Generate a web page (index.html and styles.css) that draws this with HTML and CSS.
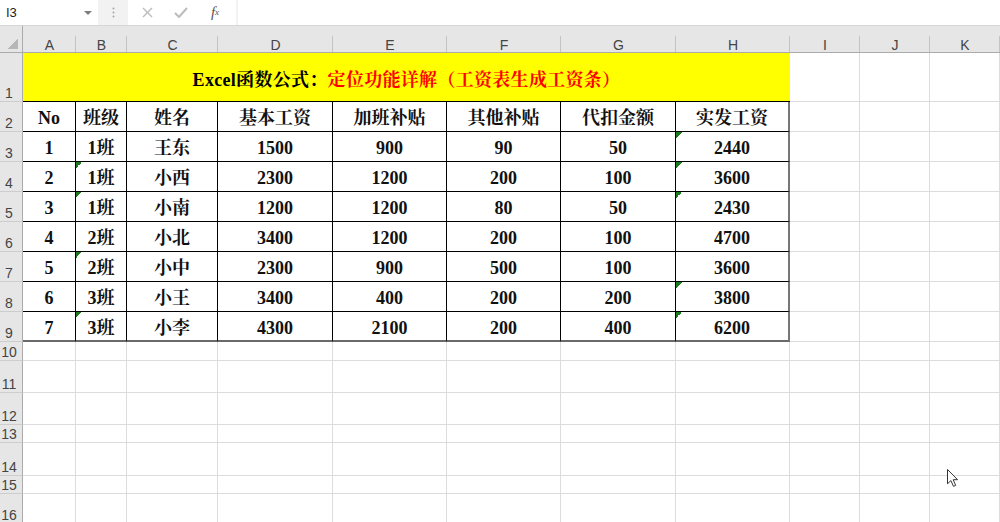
FILE: index.html
```html
<!DOCTYPE html>
<html lang="zh-CN">
<head>
<meta charset="utf-8">
<title>工资表</title>
<link rel="stylesheet" href="styles.css">
</head>
<body>
<div class="toolbar">
  <div class="namebox"><span>I3</span><span class="dd"></span></div>
  <div class="grip">
    <svg width="3" height="11" viewBox="0 0 3 11"><circle cx="1.5" cy="1.5" r="1" fill="#a8a8a8"/><circle cx="1.5" cy="5.5" r="1" fill="#a8a8a8"/><circle cx="1.5" cy="9.5" r="1" fill="#a8a8a8"/></svg>
  </div>
  <div class="fnbox">
    <span class="btn"><svg width="11" height="11" viewBox="0 0 11 11"><path d="M1 1L10 10M10 1L1 10" stroke="#bcbcbc" stroke-width="1.4" fill="none"/></svg></span>
    <span class="btn"><svg width="14" height="11" viewBox="0 0 14 11"><path d="M1 6L5 10L13 1" stroke="#bcbcbc" stroke-width="2" fill="none"/></svg></span>
    <span class="btn fx"><i>f</i><sub>x</sub></span>
  </div>
  <div class="input"></div>
</div>

<div class="sheet">
  <div class="corner"></div>
  <div class="ch">A</div><div class="ch">B</div><div class="ch">C</div><div class="ch">D</div><div class="ch">E</div><div class="ch">F</div><div class="ch">G</div><div class="ch">H</div><div class="ch">I</div><div class="ch">J</div><div class="ch">K</div>

  <div class="rh">1</div>
  <div class="title">Excel函数公式：<span class="red">定位功能详解（工资表生成工资条）</span></div>
  <div class="g"></div><div class="g"></div><div class="g"></div>

  <div class="rh">2</div>
  <div class="t">No</div><div class="t">班级</div><div class="t">姓名</div><div class="t">基本工资</div><div class="t">加班补贴</div><div class="t">其他补贴</div><div class="t">代扣金额</div><div class="t h">实发工资</div>
  <div class="g"></div><div class="g"></div><div class="g"></div>

  <div class="rh">3</div>
  <div class="t">1</div><div class="t">1班</div><div class="t">王东</div><div class="t">1500</div><div class="t">900</div><div class="t">90</div><div class="t">50</div><div class="t h tri">2440</div>
  <div class="g"></div><div class="g"></div><div class="g"></div>

  <div class="rh">4</div>
  <div class="t">2</div><div class="t tri">1班</div><div class="t">小西</div><div class="t">2300</div><div class="t">1200</div><div class="t">200</div><div class="t">100</div><div class="t h tri">3600</div>
  <div class="g"></div><div class="g"></div><div class="g"></div>

  <div class="rh">5</div>
  <div class="t">3</div><div class="t tri">1班</div><div class="t">小南</div><div class="t">1200</div><div class="t">1200</div><div class="t">80</div><div class="t">50</div><div class="t h tri">2430</div>
  <div class="g"></div><div class="g"></div><div class="g"></div>

  <div class="rh">6</div>
  <div class="t">4</div><div class="t">2班</div><div class="t">小北</div><div class="t">3400</div><div class="t">1200</div><div class="t">200</div><div class="t">100</div><div class="t h">4700</div>
  <div class="g"></div><div class="g"></div><div class="g"></div>

  <div class="rh">7</div>
  <div class="t">5</div><div class="t tri">2班</div><div class="t">小中</div><div class="t">2300</div><div class="t">900</div><div class="t">500</div><div class="t">100</div><div class="t h">3600</div>
  <div class="g"></div><div class="g"></div><div class="g"></div>

  <div class="rh">8</div>
  <div class="t">6</div><div class="t">3班</div><div class="t">小王</div><div class="t">3400</div><div class="t">400</div><div class="t">200</div><div class="t">200</div><div class="t h tri">3800</div>
  <div class="g"></div><div class="g"></div><div class="g"></div>

  <div class="rh">9</div>
  <div class="t b">7</div><div class="t b tri">3班</div><div class="t b">小李</div><div class="t b">4300</div><div class="t b">2100</div><div class="t b">200</div><div class="t b">400</div><div class="t b h tri">6200</div>
  <div class="g"></div><div class="g"></div><div class="g"></div>

  <div class="rh">10</div>
  <div class="g"></div><div class="g"></div><div class="g"></div><div class="g"></div><div class="g"></div><div class="g"></div><div class="g"></div><div class="g"></div><div class="g"></div><div class="g"></div><div class="g"></div>
  <div class="rh">11</div>
  <div class="g"></div><div class="g"></div><div class="g"></div><div class="g"></div><div class="g"></div><div class="g"></div><div class="g"></div><div class="g"></div><div class="g"></div><div class="g"></div><div class="g"></div>
  <div class="rh">12</div>
  <div class="g"></div><div class="g"></div><div class="g"></div><div class="g"></div><div class="g"></div><div class="g"></div><div class="g"></div><div class="g"></div><div class="g"></div><div class="g"></div><div class="g"></div>
  <div class="rh">13</div>
  <div class="g"></div><div class="g"></div><div class="g"></div><div class="g"></div><div class="g"></div><div class="g"></div><div class="g"></div><div class="g"></div><div class="g"></div><div class="g"></div><div class="g"></div>
  <div class="rh">14</div>
  <div class="g"></div><div class="g"></div><div class="g"></div><div class="g"></div><div class="g"></div><div class="g"></div><div class="g"></div><div class="g"></div><div class="g"></div><div class="g"></div><div class="g"></div>
  <div class="rh">15</div>
  <div class="g"></div><div class="g"></div><div class="g"></div><div class="g"></div><div class="g"></div><div class="g"></div><div class="g"></div><div class="g"></div><div class="g"></div><div class="g"></div><div class="g"></div>
  <div class="rh">16</div>
  <div class="g"></div><div class="g"></div><div class="g"></div><div class="g"></div><div class="g"></div><div class="g"></div><div class="g"></div><div class="g"></div><div class="g"></div><div class="g"></div><div class="g"></div>
</div>

<svg class="pointer" width="14" height="20" viewBox="0 0 14 20">
  <path d="M1.5 1.5V15.8L4.9 12.6L7.5 18.4L9.7 17.4L7.2 11.7H11.6Z" fill="#fff" stroke="#333" stroke-width="1" stroke-linejoin="round"/>
</svg>
</body>
</html>
```

FILE: styles.css
```css
* { box-sizing: border-box; margin: 0; padding: 0; }

html, body {
  width: 1000px;
  height: 522px;
  overflow: hidden;
  background: #fff;
}

body {
  position: relative;
  font-family: "Liberation Sans", Arial, sans-serif;
}

/* formula bar */
.toolbar {
  display: flex;
  height: 26px;
  background: #f2f2f2;
  border-bottom: 1px solid #d6d6d6;
}

.namebox {
  width: 98px;
  height: 25px;
  background: #fff;
  display: flex;
  align-items: center;
  padding-left: 6px;
  font-size: 13px;
  color: #222;
}

.namebox .dd {
  margin-left: auto;
  margin-right: 6px;
  border-left: 4px solid transparent;
  border-right: 4px solid transparent;
  border-top: 4px solid #7d7d7d;
}

.grip {
  width: 30px;
  display: flex;
  align-items: center;
  justify-content: center;
}

.fnbox {
  width: 108px;
  height: 25px;
  background: #fff;
  display: flex;
  align-items: center;
  padding-left: 2px;
}

.btn {
  width: 34px;
  display: flex;
  align-items: center;
  justify-content: center;
}

.fx {
  font-family: "Liberation Serif", serif;
  font-size: 15px;
  color: #555;
  line-height: 1;
}

.fx sub {
  font-size: 9px;
  font-style: italic;
  vertical-align: -1px;
}

.input {
  flex: 1;
  height: 25px;
  margin-left: 2px;
  background: #fff;
}

/* worksheet grid */
.sheet {
  display: grid;
  grid-template-columns: 23px 53px 51px 91px 115px 114px 114px 115px 114px 70px 70px 70px;
  grid-template-rows: 27px 49px repeat(8, 30px) 19px 32px 32px 18px 33px 18px 30px;
}

.corner {
  background:
    linear-gradient(135deg, transparent 50%, #b7b7b7 50%) right 4px bottom 3px / 10px 10px no-repeat,
    #e6e6e6;
  border-right: 1px solid #ababab;
  border-bottom: 1px solid #ababab;
}

.ch {
  display: flex;
  align-items: flex-end;
  justify-content: center;
  font-size: 14px;
  line-height: 14px;
  color: #444;
  padding-bottom: 0;
  background:
    linear-gradient(#c3c3c3, #c3c3c3) right bottom / 1px 16px no-repeat,
    #e6e6e6;
  border-bottom: 1px solid #ababab;
}

.rh {
  display: flex;
  align-items: flex-end;
  justify-content: center;
  font-size: 14px;
  line-height: 14px;
  color: #444;
  padding: 0 4px 1px 0;
  background: #e6e6e6;
  border-right: 1px solid #ababab;
  border-bottom: 1px solid #cdcdcd;
}

.g {
  border-right: 1px solid #dadcdd;
  border-bottom: 1px solid #dadcdd;
}

.title {
  grid-column: span 8;
  display: flex;
  align-items: center;
  justify-content: center;
  background: #ffff00;
  border-bottom: 1px solid #000;
  font-family: "Liberation Serif", "Noto Serif CJK SC", "Noto Sans CJK SC", serif;
  font-weight: bold;
  font-size: 18px;
  letter-spacing: 0.3px;
  color: #000;
  padding-top: 1px;
}

.title .red { color: #ff0000; }

.t {
  display: flex;
  align-items: center;
  justify-content: center;
  border-right: 1px solid #000;
  border-bottom: 1px solid #000;
  font-family: "Liberation Serif", "Noto Serif CJK SC", "Noto Sans CJK SC", serif;
  font-weight: bold;
  font-size: 18px;
  line-height: 1;
  color: #111;
  padding-top: 3px;
}

.t.h { border-right: 2px solid #777; }
.t.b { border-bottom: 2px solid #6a6a6a; }

/* error-check marker in the cell corner */
.t.tri {
  background: linear-gradient(135deg, #1d7a1d 0 50%, transparent 50%) 0 0 / 6px 6px no-repeat;
}

.pointer {
  position: absolute;
  left: 946px;
  top: 468px;
}
```
